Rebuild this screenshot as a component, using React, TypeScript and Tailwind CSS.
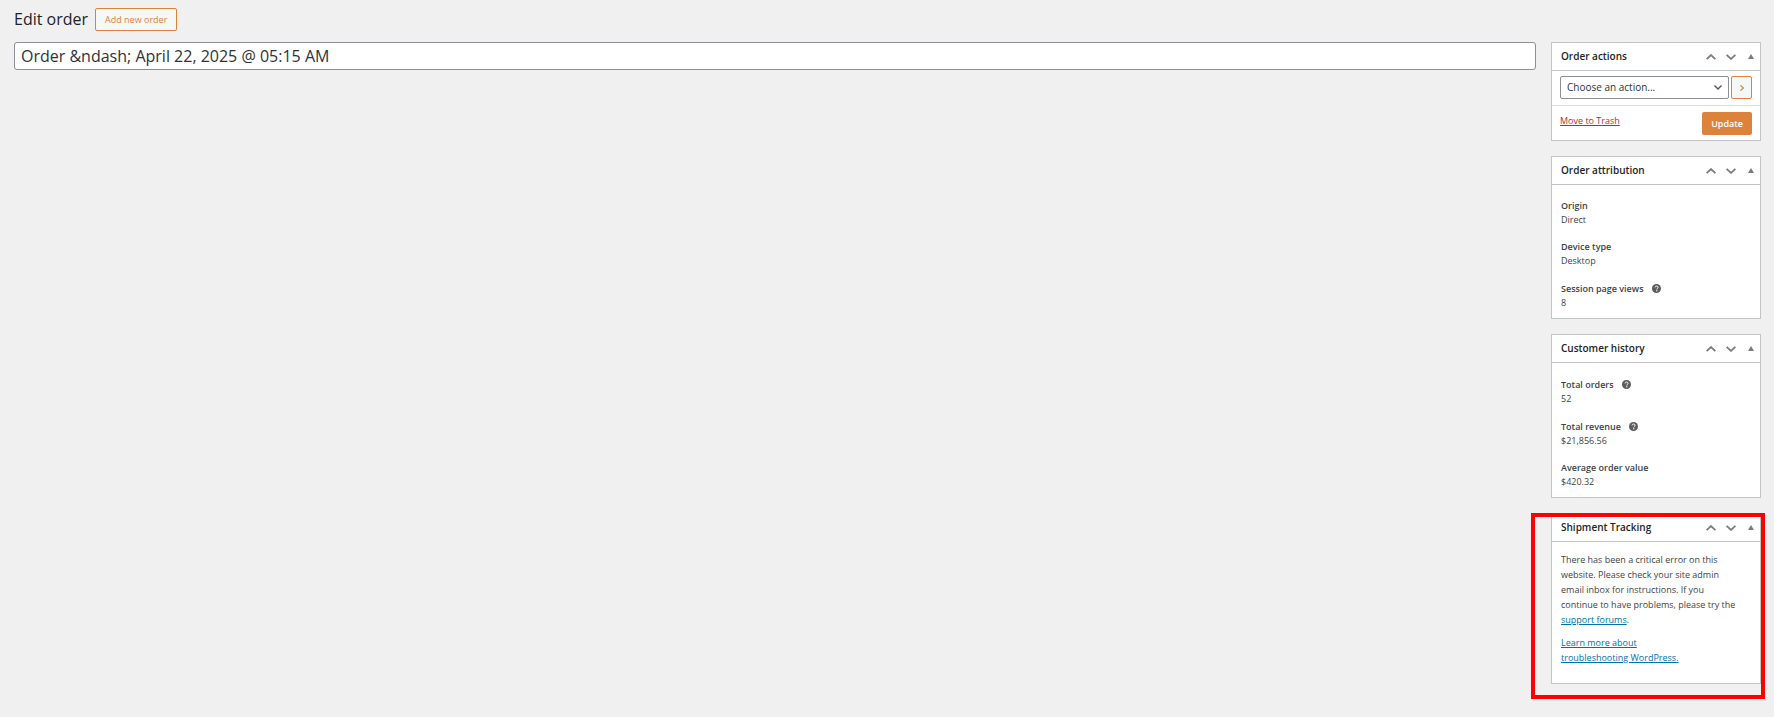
import React, { useState } from "react";

const iconButton =
  "flex h-5 items-center justify-center text-[#787c82] hover:text-black";

function HelpTip({ text }: { text: string }) {
  return (
    <svg viewBox="0 0 20 20" className="ml-2 size-[9px]" role="img" aria-label={text}>
      <circle cx="10" cy="10" r="10" fill="#5c5c5c" />
      <path
        d="M6.8 7.6c0-2 1.4-3 3.4-3s3.3 1.1 3.3 2.8c0 2.3-2.8 2.5-2.8 4.8"
        fill="none"
        stroke="#fff"
        strokeWidth="2.2"
      />
      <circle cx="10.7" cy="15" r="1.4" fill="#fff" />
    </svg>
  );
}

type PanelProps = { title: string; children: React.ReactNode };

function Panel({ title, children }: PanelProps) {
  const [open, setOpen] = useState(true);

  return (
    <section className="border border-[#c3c4c7] bg-white">
      <div className="flex h-7 items-center border-b border-[#c3c4c7] pl-[9px]">
        <h2 className="flex-1 text-[10px] leading-[15px] font-semibold text-[#1d2327]">{title}</h2>
        <button type="button" aria-label="Move up" className={iconButton + " w-5"}>
          <svg viewBox="0 0 10 6" className="w-[10px]" fill="none" stroke="currentColor" strokeWidth="1.8">
            <path d="M.6 5.2 5 1.1l4.4 4.1" />
          </svg>
        </button>
        <button type="button" aria-label="Move down" className={iconButton + " w-5"}>
          <svg viewBox="0 0 10 6" className="w-[10px]" fill="none" stroke="currentColor" strokeWidth="1.8">
            <path d="M.6.8 5 4.9 9.4.8" />
          </svg>
        </button>
        <button
          type="button"
          aria-label="Toggle panel"
          aria-expanded={open}
          onClick={() => setOpen(!open)}
          className={iconButton + " w-[19px]"}
        >
          <svg viewBox="0 0 6 5" className="w-[6px]" fill="currentColor">
            <path d="M3 0 6 5H0z" />
          </svg>
        </button>
      </div>
      {open && children}
    </section>
  );
}

type Stat = { label: string; value: string; help?: string };

function Stats({ items }: { items: Stat[] }) {
  return (
    <dl className="space-y-[13px] px-[9px] pt-[14px] pb-2 text-[9px] leading-[14px] text-[#3c434a]">
      {items.map((item) => (
        <div key={item.label}>
          <dt className={item.help ? "flex h-[15px] items-center font-semibold" : "font-semibold"}>
            {item.label}
            {item.help && <HelpTip text={item.help} />}
          </dt>
          <dd>{item.value}</dd>
        </div>
      ))}
    </dl>
  );
}

const attribution: Stat[] = [
  { label: "Origin", value: "Direct" },
  { label: "Device type", value: "Desktop" },
  { label: "Session page views", value: "8", help: "Pages viewed before the order" },
];

const history: Stat[] = [
  { label: "Total orders", value: "52", help: "Number of orders" },
  { label: "Total revenue", value: "$21,856.56", help: "Total spent" },
  { label: "Average order value", value: "$420.32" },
];

function App() {
  const [title, setTitle] = useState("Order &ndash; April 22, 2025 @ 05:15 AM");

  return (
    <main className="min-h-screen bg-[#f0f0f1] pt-2 pr-[13px] pl-[14px] font-['Open_Sans',sans-serif] text-[#3c434a]">
      <header className="flex items-center gap-[7px]">
        <h1 className="text-[16px] leading-[23px] text-[#1d2327]">Edit order</h1>
        <a
          href="#new"
          className="flex h-[23px] items-center rounded-xs border border-[#dd823b] bg-[#f6f7f7] px-[9px] text-[9px] text-[#dd823b]"
        >
          Add new order
        </a>
      </header>

      <div className="mt-[11px] flex items-start gap-[15px]">
        <input
          aria-label="Order title"
          value={title}
          onChange={(e) => setTitle(e.target.value)}
          className="h-7 min-w-0 flex-1 rounded-[3px] border border-[#8c8f94] bg-white px-[6px] text-[16px] text-[#2c3338]"
        />

        <aside className="w-[210px] shrink-0 space-y-[15px]">
          <Panel title="Order actions">
            <div className="flex items-start gap-[2px] border-b border-[#dcdcde] px-2 pt-[5px] pb-[6px]">
              <div className="relative flex-1">
                <select
                  aria-label="Choose an action"
                  className="block h-[23px] w-full appearance-none rounded-xs border border-[#8c8f94] bg-white px-[6px] text-[10px] text-[#2c3338]"
                >
                  <option>Choose an action...</option>
                  <option>Send order details to customer</option>
                </select>
                <svg
                  viewBox="0 0 8 5"
                  className="pointer-events-none absolute top-[9px] right-[7px] w-2"
                  fill="none"
                  stroke="#50575e"
                  strokeWidth="1.4"
                >
                  <path d="M.5.6 4 4 7.5.6" />
                </svg>
              </div>
              <button
                type="button"
                aria-label="Apply"
                className="flex h-[23px] w-[21px] items-center justify-center rounded-xs border border-[#dd823b] bg-[#f6f7f7]"
              >
                <svg viewBox="0 0 4 6" className="h-[6px]" fill="none" stroke="#dd823b" strokeWidth="1.2">
                  <path d="M.5.4 3.3 3 .5 5.6" />
                </svg>
              </button>
            </div>
            <div className="flex items-start justify-between px-2 pt-[6px] pb-[5px]">
              <a href="#trash" className="text-[9px] leading-[17px] text-[#b32d2e] underline">
                Move to Trash
              </a>
              <button
                type="button"
                className="h-[23px] rounded-xs bg-[#dd823b] px-[9px] text-[9px] font-semibold text-white"
              >
                Update
              </button>
            </div>
          </Panel>

          <Panel title="Order attribution">
            <Stats items={attribution} />
          </Panel>

          <Panel title="Customer history">
            <Stats items={history} />
          </Panel>

          <div className="relative">
            <Panel title="Shipment Tracking">
              <div className="space-y-2 pt-[10px] pr-5 pb-[18px] pl-[9px] text-[9px] leading-[15px]">
                <p>
                  There has been a critical error on this website. Please check your site admin email
                  inbox for instructions. If you continue to have problems, please try the{" "}
                  <a href="#forums" className="text-[#0073aa] underline">
                    support forums
                  </a>
                  .
                </p>
                <p>
                  <a href="#learn" className="text-[#0073aa] underline">
                    Learn more about
                    <br />
                    troubleshooting WordPress.
                  </a>
                </p>
              </div>
            </Panel>
            <div className="pointer-events-none absolute top-0 -right-1 -bottom-[15px] -left-5 border-4 border-[#ff0000]" />
          </div>
        </aside>
      </div>
    </main>
  );
}

export default App;
